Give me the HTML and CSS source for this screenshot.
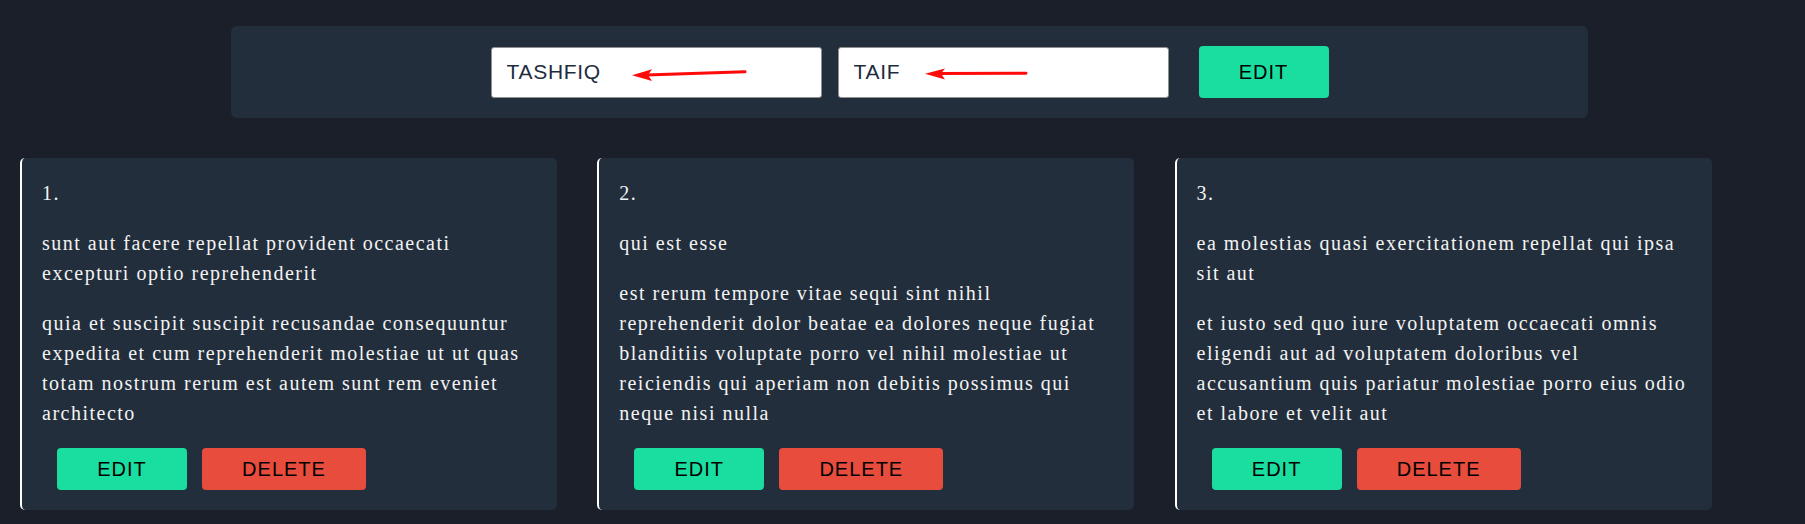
FILE: index.html
```html
<!DOCTYPE html>
<html lang="en">
<head>
<meta charset="utf-8">
<title>Posts</title>
<link rel="stylesheet" href="styles.css">
</head>
<body>
<header class="toolbar">
  <div class="field">
    <input class="text-input" type="text" value="TASHFIQ">
    <svg class="arrow" width="331" height="51" viewBox="0 0 331 51" aria-hidden="true">
      <line x1="254" y1="24.7" x2="155" y2="27.9" stroke="#ff0a0a" stroke-width="3" stroke-linecap="round"/>
      <polygon points="141,28.3 161,22.3 157,28.1 161,34" fill="#ff0a0a"/>
    </svg>
  </div>
  <div class="field">
    <input class="text-input" type="text" value="TAIF">
    <svg class="arrow" width="331" height="51" viewBox="0 0 331 51" aria-hidden="true">
      <line x1="188" y1="26.3" x2="101" y2="26.6" stroke="#ff0a0a" stroke-width="3" stroke-linecap="round"/>
      <polygon points="87,26.7 107,21.5 103,26.6 107,32.5" fill="#ff0a0a"/>
    </svg>
  </div>
  <button class="btn btn-edit btn-tall">EDIT</button>
</header>

<main class="posts">
  <article class="post">
    <p class="post-num">1.</p>
    <p class="post-title">sunt aut facere repellat provident occaecati excepturi optio reprehenderit</p>
    <p class="post-body">quia et suscipit suscipit recusandae consequuntur expedita et cum reprehenderit molestiae ut ut quas totam nostrum rerum est autem sunt rem eveniet architecto</p>
    <div class="post-actions">
      <button class="btn btn-edit">EDIT</button>
      <button class="btn btn-delete">DELETE</button>
    </div>
  </article>
  <article class="post">
    <p class="post-num">2.</p>
    <p class="post-title">qui est esse</p>
    <p class="post-body">est rerum tempore vitae sequi sint nihil reprehenderit dolor beatae ea dolores neque fugiat blanditiis voluptate porro vel nihil molestiae ut reiciendis qui aperiam non debitis possimus qui neque nisi nulla</p>
    <div class="post-actions">
      <button class="btn btn-edit">EDIT</button>
      <button class="btn btn-delete">DELETE</button>
    </div>
  </article>
  <article class="post">
    <p class="post-num">3.</p>
    <p class="post-title">ea molestias quasi exercitationem repellat qui ipsa sit aut</p>
    <p class="post-body">et iusto sed quo iure voluptatem occaecati omnis eligendi aut ad voluptatem doloribus vel accusantium quis pariatur molestiae porro eius odio et labore et velit aut</p>
    <div class="post-actions">
      <button class="btn btn-edit">EDIT</button>
      <button class="btn btn-delete">DELETE</button>
    </div>
  </article>
</main>
</body>
</html>
```

FILE: styles.css
```css
* { box-sizing: border-box; }

body {
  margin: 8px;
  background: #1a1f2a;
  font-family: "Liberation Serif", "Times New Roman", serif;
}

.toolbar {
  width: 1357px;
  margin: 18px 0 0 223px;
  padding: 20px;
  background: #222e3c;
  border-radius: 6px;
  display: flex;
  justify-content: center;
  align-items: center;
  gap: 16px;
}

.field {
  position: relative;
  width: 331px;
  height: 51px;
}

.text-input {
  width: 100%;
  height: 100%;
  margin: 0;
  padding: 0 15px;
  border: 1px solid #8f8f8f;
  border-radius: 3px;
  background: #fff;
  color: #1e2c3e;
  font-family: "Liberation Sans", Arial, sans-serif;
  font-size: 21px;
  letter-spacing: 0.7px;
  outline: none;
}

.arrow {
  position: absolute;
  left: 0;
  top: 0;
  pointer-events: none;
}

.btn {
  height: 42px;
  margin: 0;
  padding: 0;
  border: none;
  border-radius: 4px;
  color: #000;
  font-family: "Liberation Sans", Arial, sans-serif;
  font-size: 20px;
  letter-spacing: 1px;
  cursor: pointer;
}

.btn-edit {
  width: 130px;
  background: #19de9f;
}

.btn-delete {
  width: 164px;
  background: #e74c3c;
}

.btn-tall {
  height: 52px;
  margin-left: 14px;
}

.posts {
  margin-top: 40px;
  padding-left: 12px;
  display: grid;
  grid-template-columns: repeat(3, 537px);
  column-gap: 40.3px;
}

.post {
  background: #222e3c;
  border-left: 2px solid #fff;
  border-radius: 5px;
  padding: 20px;
  color: #f3f3f3;
  font-size: 20px;
  line-height: 30px;
  letter-spacing: 1.5px;
}

.post p {
  margin: 0 0 20px;
}

.post-actions {
  display: flex;
  gap: 15px;
  padding-left: 15px;
}
```
